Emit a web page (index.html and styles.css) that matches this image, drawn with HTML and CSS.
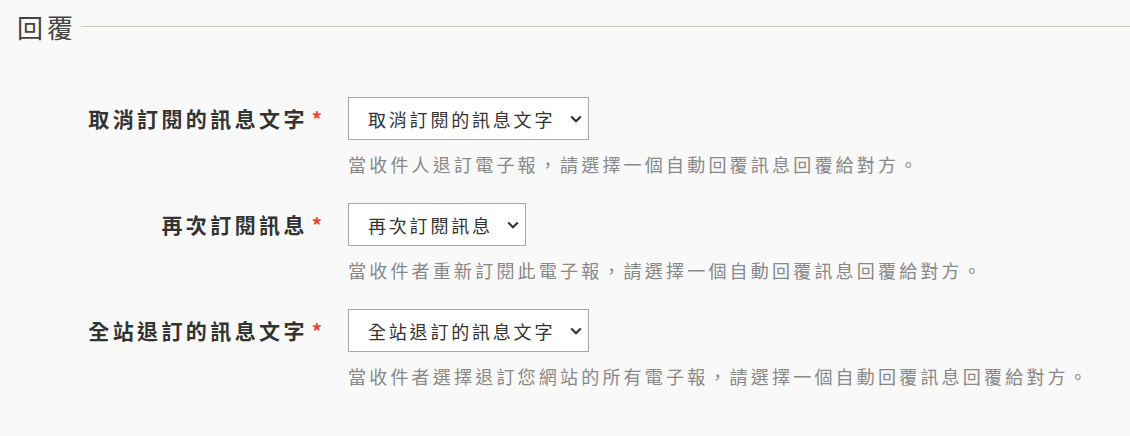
FILE: index.html
```html
<!DOCTYPE html>
<html lang="zh-Hant">
<head>
<meta charset="utf-8">
<link rel="stylesheet" href="styles.css">
</head>
<body>
<section class="section">
  <div class="head">
    <h2 class="title">回覆</h2>
    <div class="rule"></div>
  </div>
  <div class="form">
    <div class="row">
      <label class="label">取消訂閱的訊息文字<span class="req">*</span></label>
      <div class="field">
        <div class="select-wrap">
          <select class="select"><option>取消訂閱的訊息文字</option></select>
          <svg class="chev" width="12" height="8" viewBox="0 0 12 8"><path d="M1.2 1.5 L6 6.2 L10.8 1.5" fill="none" stroke="#333" stroke-width="2.2"/></svg>
        </div>
        <p class="help">當收件人退訂電子報，請選擇一個自動回覆訊息回覆給對方。</p>
      </div>
    </div>
    <div class="row">
      <label class="label">再次訂閱訊息<span class="req">*</span></label>
      <div class="field">
        <div class="select-wrap">
          <select class="select"><option>再次訂閱訊息</option></select>
          <svg class="chev" width="12" height="8" viewBox="0 0 12 8"><path d="M1.2 1.5 L6 6.2 L10.8 1.5" fill="none" stroke="#333" stroke-width="2.2"/></svg>
        </div>
        <p class="help">當收件者重新訂閱此電子報，請選擇一個自動回覆訊息回覆給對方。</p>
      </div>
    </div>
    <div class="row">
      <label class="label">全站退訂的訊息文字<span class="req">*</span></label>
      <div class="field">
        <div class="select-wrap">
          <select class="select"><option>全站退訂的訊息文字</option></select>
          <svg class="chev" width="12" height="8" viewBox="0 0 12 8"><path d="M1.2 1.5 L6 6.2 L10.8 1.5" fill="none" stroke="#333" stroke-width="2.2"/></svg>
        </div>
        <p class="help">當收件者選擇退訂您網站的所有電子報，請選擇一個自動回覆訊息回覆給對方。</p>
      </div>
    </div>
  </div>
</section>
</body>
</html>
```

FILE: styles.css
```css
* { box-sizing: border-box; }
html, body { margin: 0; padding: 0; }
body {
  background: #f9f9f9;
  font-family: "Noto Sans CJK TC", "Noto Sans", sans-serif;
  color: #333;
  width: 1130px;
  height: 436px;
  overflow: hidden;
}
.section { padding: 9px 0 0 17px; }
.head { display: flex; align-items: center; height: 36px; }
.title {
  margin: 0;
  font-size: 26px;
  font-weight: 400;
  line-height: 36px;
  letter-spacing: 4px;
  color: #444;
  padding-right: 4px;
}
.rule { flex: 1; height: 1px; background: #cbcbbd; margin-top: -2px; }
.form {
  margin-top: 52px;
  display: flex;
  flex-direction: column;
  gap: 27px;
}
.row {
  display: grid;
  grid-template-columns: 305px auto;
  column-gap: 26px;
  align-items: start;
}
.label {
  font-size: 21px;
  font-weight: 700;
  line-height: 43px;
  letter-spacing: 3.4px;
  color: #333;
  text-align: right;
  white-space: nowrap;
}
.req { color: #e8412c; letter-spacing: 0; margin-left: 4px; font-size: 20px; }
.field { display: flex; flex-direction: column; align-items: flex-start; }
.select-wrap { position: relative; display: inline-block; }
.select {
  appearance: none;
  -webkit-appearance: none;
  display: block;
  height: 43px;
  margin: 0;
  padding: 0 32px 0 19px;
  border: 1px solid #a6a6a6;
  border-radius: 0;
  background: #fff;
  font-family: "Noto Sans CJK TC", "Noto Sans", sans-serif;
  font-size: 18px;
  letter-spacing: 2.8px;
  color: #333;
}
.chev { position: absolute; right: 7px; top: 18px; pointer-events: none; }
.help {
  margin: 12px 0 0;
  font-size: 18px;
  line-height: 24px;
  letter-spacing: 3.2px;
  color: #888;
  white-space: nowrap;
}
```
